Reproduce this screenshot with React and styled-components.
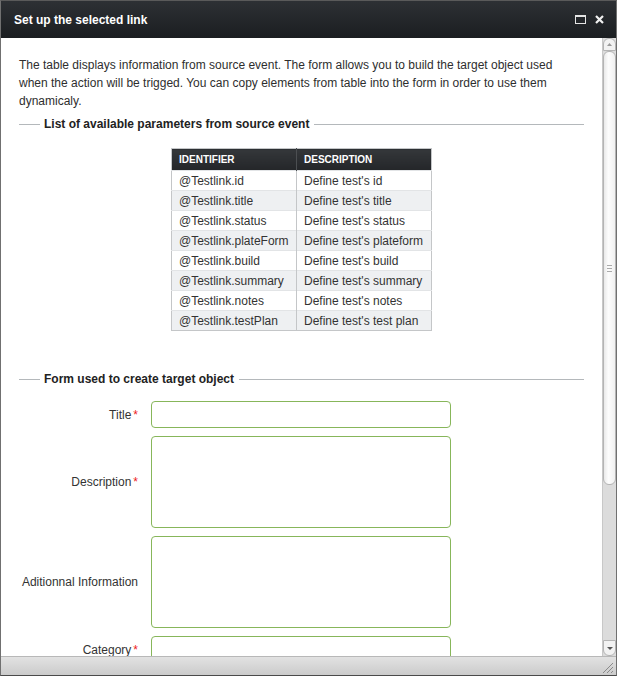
import React from 'react'
import styled, { createGlobalStyle } from 'styled-components'

const GlobalStyle = createGlobalStyle`
  html, body {
    margin: 0;
    padding: 0;
    height: 100%;
  }
  body {
    font-family: "Liberation Sans", Arial, sans-serif;
    font-size: 12px;
    color: #333;
  }
`

const Window = styled.div`
  display: flex;
  flex-direction: column;
  box-sizing: border-box;
  height: 100vh;
  border: 1px solid #707070;
  border-top-color: #5a5a5a;
  border-bottom-color: #4a4a4a;
  background: #fff;
`
const TitleBar = styled.div`
  display: flex;
  align-items: center;
  height: 37px;
  padding: 0 12px 0 13px;
  background: linear-gradient(#2d3034, #1b1e21);
`
const Title = styled.h1`
  flex: 1;
  margin: 0;
  font-size: 12px;
  font-weight: bold;
  color: #fff;
`
const Tools = styled.div`
  display: flex;
  align-items: center;
  gap: 9px;
`
const Body = styled.div`
  flex: 1;
  display: flex;
  min-height: 0;
`
const Content = styled.div`
  flex: 1;
  padding: 18px 18px 0 18px;
  overflow: hidden;
`
const Intro = styled.p`
  margin: 0;
  line-height: 18px;
  color: #2e2e2e;
`
const Legend = styled.div`
  display: flex;
  align-items: center;
  gap: 4px;
  height: 16px;
  margin-top: ${p => p.$top}px;
  font-weight: bold;
  color: #222;
  &::before, &::after {
    content: '';
    height: 1px;
    background: #b4b8bb;
  }
  &::before { width: 21px; }
  &::after { flex: 1; margin-left: 1px; }
`
const Table = styled.table`
  margin: 16px auto 0;
  border-collapse: collapse;
  border: 1px solid #c4c6c8;
`
const Th = styled.th`
  height: 21px;
  padding: 0 7px;
  text-align: left;
  font-size: 10px;
  font-weight: bold;
  color: #fff;
  background: linear-gradient(#34373a, #242629);
  border-right: 1px solid #4c4f52;
  &:last-child { border-right: none; }
`
const Row = styled.tr`
  background: ${p => (p.$alt ? '#eef0f2' : '#fff')};
`
const Td = styled.td`
  height: 20px;
  padding: 0 7px;
  width: ${p => p.$w}px;
  box-sizing: border-box;
  border-right: 1px solid #c4c6c8;
  border-top: 1px solid #e2e4e6;
  color: #333;
  white-space: nowrap;
  &:last-child { border-right: none; }
`
const Form = styled.div`
  display: flex;
  flex-direction: column;
  gap: 8px;
  margin-top: 14px;
`
const Field = styled.div`
  display: grid;
  grid-template-columns: 119px 300px;
  column-gap: 13px;
  align-items: center;
`
const Label = styled.label`
  text-align: right;
  color: #333;
`
const Req = styled.span`
  margin-left: 2px;
  color: #e22;
`
const Input = styled.div`
  box-sizing: border-box;
  height: ${p => p.$h}px;
  border: 1px solid #87b65a;
  border-radius: 4px;
  background: #fff;
`
const Scrollbar = styled.div`
  display: flex;
  flex-direction: column;
  width: 13px;
  background: #dcdcdc;
  border-left: 1px solid #c8c8c8;
`
const ArrowButton = styled.div`
  display: flex;
  align-items: center;
  justify-content: center;
  height: ${p => p.$h}px;
  background: #f2f2f2;
  border: 1px solid #b4b4b4;
  border-radius: ${p => (p.$up ? '6px 6px 0 0' : '0 0 6px 6px')};
`
const Thumb = styled.div`
  display: flex;
  align-items: center;
  justify-content: center;
  height: 432px;
  background: linear-gradient(90deg, #e9e9e9, #fdfdfd 40%, #f0f0f0);
  border: 1px solid #b4b4b4;
  border-radius: 6px;
`
const Track = styled.div`
  flex: 1;
`
const Footer = styled.div`
  display: flex;
  justify-content: flex-end;
  align-items: flex-end;
  height: 16px;
  padding: 0 3px 2px 0;
  border-top: 1px solid #b8b8b8;
  background: linear-gradient(#e2e2e2, #cbcbcb);
`

const params = [
  ['@Testlink.id', "Define test's id"],
  ['@Testlink.title', "Define test's title"],
  ['@Testlink.status', "Define test's status"],
  ['@Testlink.plateForm', "Define test's plateform"],
  ['@Testlink.build', "Define test's build"],
  ['@Testlink.summary', "Define test's summary"],
  ['@Testlink.notes', "Define test's notes"],
  ['@Testlink.testPlan', "Define test's test plan"],
]

const fields = [
  { label: 'Title', req: true, h: 27 },
  { label: 'Description', req: true, h: 92 },
  { label: 'Aditionnal Information', req: false, h: 92 },
  { label: 'Category', req: true, h: 27 },
]

function App() {
  return (
    <>
      <GlobalStyle />
      <Window>
        <TitleBar>
          <Title>Set up the selected link</Title>
          <Tools>
            <svg width="11" height="9" viewBox="0 0 11 9">
              <rect x="0.5" y="0.5" width="10" height="8" fill="none" stroke="#e4e4e4" />
              <rect x="0" y="0" width="11" height="2" fill="#e4e4e4" />
            </svg>
            <svg width="9" height="9" viewBox="0 0 9 9">
              <path d="M1 1 L8 8 M8 1 L1 8" stroke="#f0f0f0" strokeWidth="2.2" />
            </svg>
          </Tools>
        </TitleBar>
        <Body>
          <Content>
            <Intro>
              The table displays information from source event. The form allows you to build the target object used
              when the action will be trigged. You can copy elements from table into the form in order to use them
              dynamicaly.
            </Intro>
            <Legend $top={6}>List of available parameters from source event</Legend>
            <Table>
              <thead>
                <tr>
                  <Th>IDENTIFIER</Th>
                  <Th>DESCRIPTION</Th>
                </tr>
              </thead>
              <tbody>
                {params.map(([id, desc], i) => (
                  <Row key={id} $alt={i % 2 === 1}>
                    <Td $w={125}>{id}</Td>
                    <Td $w={135}>{desc}</Td>
                  </Row>
                ))}
              </tbody>
            </Table>
            <Legend $top={40}>Form used to create target object</Legend>
            <Form>
              {fields.map(f => (
                <Field key={f.label}>
                  <Label>
                    {f.label}
                    {f.req && <Req>*</Req>}
                  </Label>
                  <Input $h={f.h} />
                </Field>
              ))}
            </Form>
          </Content>
          <Scrollbar>
            <ArrowButton $h={11} $up>
              <svg width="5" height="3" viewBox="0 0 5 3"><path d="M0 3 L2.5 0 L5 3 Z" fill="#999" /></svg>
            </ArrowButton>
            <Thumb>
              <svg width="5" height="7" viewBox="0 0 5 7">
                <path d="M0 0.5 H5 M0 3.5 H5 M0 6.5 H5" stroke="#aaa" strokeWidth="1" />
              </svg>
            </Thumb>
            <Track />
            <ArrowButton $h={14}>
              <svg width="6" height="3" viewBox="0 0 6 3"><path d="M0 0 L3 3 L6 0 Z" fill="#555" /></svg>
            </ArrowButton>
          </Scrollbar>
        </Body>
        <Footer>
          <svg width="11" height="11" viewBox="0 0 11 11">
            <path d="M1 11 L11 1 M5 11 L11 5 M9 11 L11 9" stroke="#8a8a8a" strokeWidth="1" />
          </svg>
        </Footer>
      </Window>
    </>
  )
}

export default App
